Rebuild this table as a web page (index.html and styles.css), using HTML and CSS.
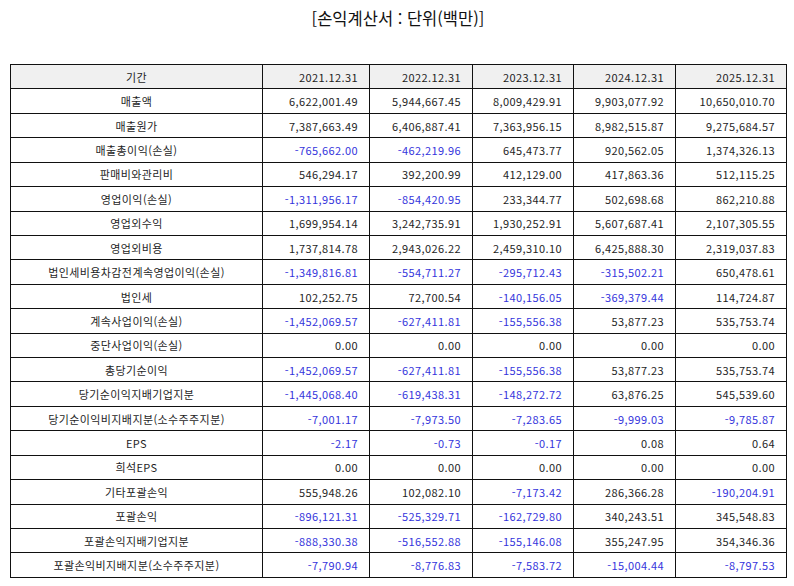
FILE: index.html
```html
<!DOCTYPE html>
<html lang="ko">
<head>
<meta charset="utf-8">
<link rel="stylesheet" href="styles.css">
</head>
<body>
<div class="page">
  <h1 class="title">[손익계산서 : 단위(백만)]</h1>
  <table class="fin">
    <colgroup>
      <col class="c-label"><col class="c1"><col class="c2"><col class="c3"><col class="c4"><col class="c5">
    </colgroup>
    <thead>
      <tr><th>기간</th><th>2021.12.31</th><th>2022.12.31</th><th>2023.12.31</th><th>2024.12.31</th><th>2025.12.31</th></tr>
    </thead>
    <tbody>
      <tr><td>매출액</td><td>6,622,001.49</td><td>5,944,667.45</td><td>8,009,429.91</td><td>9,903,077.92</td><td>10,650,010.70</td></tr>
      <tr><td>매출원가</td><td>7,387,663.49</td><td>6,406,887.41</td><td>7,363,956.15</td><td>8,982,515.87</td><td>9,275,684.57</td></tr>
      <tr><td>매출총이익(손실)</td><td class="neg">-765,662.00</td><td class="neg">-462,219.96</td><td>645,473.77</td><td>920,562.05</td><td>1,374,326.13</td></tr>
      <tr><td>판매비와관리비</td><td>546,294.17</td><td>392,200.99</td><td>412,129.00</td><td>417,863.36</td><td>512,115.25</td></tr>
      <tr><td>영업이익(손실)</td><td class="neg">-1,311,956.17</td><td class="neg">-854,420.95</td><td>233,344.77</td><td>502,698.68</td><td>862,210.88</td></tr>
      <tr><td>영업외수익</td><td>1,699,954.14</td><td>3,242,735.91</td><td>1,930,252.91</td><td>5,607,687.41</td><td>2,107,305.55</td></tr>
      <tr><td>영업외비용</td><td>1,737,814.78</td><td>2,943,026.22</td><td>2,459,310.10</td><td>6,425,888.30</td><td>2,319,037.83</td></tr>
      <tr><td>법인세비용차감전계속영업이익(손실)</td><td class="neg">-1,349,816.81</td><td class="neg">-554,711.27</td><td class="neg">-295,712.43</td><td class="neg">-315,502.21</td><td>650,478.61</td></tr>
      <tr><td>법인세</td><td>102,252.75</td><td>72,700.54</td><td class="neg">-140,156.05</td><td class="neg">-369,379.44</td><td>114,724.87</td></tr>
      <tr><td>계속사업이익(손실)</td><td class="neg">-1,452,069.57</td><td class="neg">-627,411.81</td><td class="neg">-155,556.38</td><td>53,877.23</td><td>535,753.74</td></tr>
      <tr><td>중단사업이익(손실)</td><td>0.00</td><td>0.00</td><td>0.00</td><td>0.00</td><td>0.00</td></tr>
      <tr><td>총당기순이익</td><td class="neg">-1,452,069.57</td><td class="neg">-627,411.81</td><td class="neg">-155,556.38</td><td>53,877.23</td><td>535,753.74</td></tr>
      <tr><td>당기순이익지배기업지분</td><td class="neg">-1,445,068.40</td><td class="neg">-619,438.31</td><td class="neg">-148,272.72</td><td>63,876.25</td><td>545,539.60</td></tr>
      <tr><td>당기순이익비지배지분(소수주주지분)</td><td class="neg">-7,001.17</td><td class="neg">-7,973.50</td><td class="neg">-7,283.65</td><td class="neg">-9,999.03</td><td class="neg">-9,785.87</td></tr>
      <tr><td>EPS</td><td class="neg">-2.17</td><td class="neg">-0.73</td><td class="neg">-0.17</td><td>0.08</td><td>0.64</td></tr>
      <tr><td>희석EPS</td><td>0.00</td><td>0.00</td><td>0.00</td><td>0.00</td><td>0.00</td></tr>
      <tr><td>기타포괄손익</td><td>555,948.26</td><td>102,082.10</td><td class="neg">-7,173.42</td><td>286,366.28</td><td class="neg">-190,204.91</td></tr>
      <tr><td>포괄손익</td><td class="neg">-896,121.31</td><td class="neg">-525,329.71</td><td class="neg">-162,729.80</td><td>340,243.51</td><td>345,548.83</td></tr>
      <tr><td>포괄손익지배기업지분</td><td class="neg">-888,330.38</td><td class="neg">-516,552.88</td><td class="neg">-155,146.08</td><td>355,247.95</td><td>354,346.36</td></tr>
      <tr><td>포괄손익비지배지분(소수주주지분)</td><td class="neg">-7,790.94</td><td class="neg">-8,776.83</td><td class="neg">-7,583.72</td><td class="neg">-15,004.44</td><td class="neg">-8,797.53</td></tr>
    </tbody>
  </table>
</div>
</body>
</html>
```

FILE: styles.css
```css
html, body {
  margin: 0;
  padding: 0;
  background: #ffffff;
}
body {
  font-family: "Noto Sans CJK KR", "Noto Sans", sans-serif;
  color: #1e1e1e;
}
.page {
  padding: 0 8px 0 10px;
}
.title {
  margin: 0;
  height: 64px;
  padding-top: 4px;
  box-sizing: border-box;
  text-align: center;
  font-size: 16.5px;
  font-weight: 400;
  line-height: 28px;
  color: #111;
}
.fin {
  border-collapse: collapse;
  table-layout: fixed;
  width: 776px;
  font-size: 11px;
  letter-spacing: 0.4px;
}
.c-label { width: 252px; }
.c1 { width: 107px; }
.c2 { width: 103px; }
.c3 { width: 101px; }
.c4 { width: 102px; }
.c5 { width: 111px; }
.fin tr {
  height: 24.43px;
}
.fin th,
.fin td {
  border: 1.3px solid #111111;
  padding: 0 11px 0 4px;
  text-align: right;
  font-weight: 400;
  white-space: nowrap;
}
.fin thead th {
  background: #f0f0f0;
}
.fin th:first-child,
.fin td:first-child {
  text-align: center;
  padding: 0 4px;
}
.fin td.neg {
  color: #3434dc;
}
```
